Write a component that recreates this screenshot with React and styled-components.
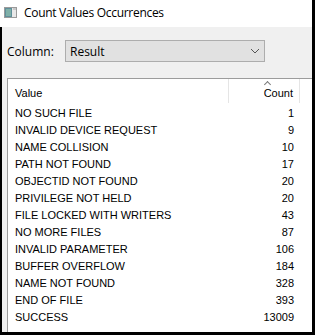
import React from 'react';
import styled, { createGlobalStyle } from 'styled-components';

const GlobalStyle = createGlobalStyle`
  html, body {
    margin: 0;
    padding: 0;
    background: #ffffff;
  }
`;

const rows = [
  { value: 'NO SUCH FILE', count: 1 },
  { value: 'INVALID DEVICE REQUEST', count: 9 },
  { value: 'NAME COLLISION', count: 10 },
  { value: 'PATH NOT FOUND', count: 17 },
  { value: 'OBJECTID NOT FOUND', count: 20 },
  { value: 'PRIVILEGE NOT HELD', count: 20 },
  { value: 'FILE LOCKED WITH WRITERS', count: 43 },
  { value: 'NO MORE FILES', count: 87 },
  { value: 'INVALID PARAMETER', count: 106 },
  { value: 'BUFFER OVERFLOW', count: 184 },
  { value: 'NAME NOT FOUND', count: 328 },
  { value: 'END OF FILE', count: 393 },
  { value: 'SUCCESS', count: 13009 },
];

const App = () => {
  return (
    <>
      <GlobalStyle />
      <Window>
        <TitleBar>
          <AppIcon width="13" height="11" viewBox="0 0 13 11">
            <rect x="0.5" y="0.5" width="12" height="10" fill="#e8e8e8" stroke="#9a9a9a" />
            <rect x="1" y="1" width="7" height="9" fill="#5f8f9a" />
            <rect x="2" y="2" width="5" height="7" fill="#7fb0a8" />
            <rect x="9" y="1" width="3" height="2" fill="#c8c8c8" />
          </AppIcon>
          <Title>Count Values Occurrences</Title>
        </TitleBar>
        <Body>
          <ColumnRow>
            <Label>Column:</Label>
            <Select>
              <span>Result</span>
              <Chevron width="10" height="6" viewBox="0 0 10 6">
                <path d="M1 1 L5 5 L9 1" fill="none" stroke="#555" strokeWidth="1" />
              </Chevron>
            </Select>
          </ColumnRow>
          <ListBox>
            <HeaderRow>
              <HeaderCell>Value</HeaderCell>
              <HeaderCell $right $sorted>Count</HeaderCell>
              <HeaderFiller />
            </HeaderRow>
            <Rows>
              {rows.map((r) => (
                <Row key={r.value}>
                  <Cell>{r.value}</Cell>
                  <Cell $right>{r.count}</Cell>
                </Row>
              ))}
            </Rows>
          </ListBox>
        </Body>
      </Window>
    </>
  );
};

const Window = styled.div`
  width: 315px;
  height: 335px;
  box-sizing: border-box;
  border-right: 3px solid #000;
  border-bottom: 3px solid #000;
  display: flex;
  flex-direction: column;
  overflow: hidden;
  background: #ffffff;
`;

const TitleBar = styled.div`
  height: 27px;
  flex: none;
  display: flex;
  align-items: center;
  padding-left: 4px;
  padding-bottom: 2px;
  box-sizing: border-box;
  background: #ffffff;
`;

const AppIcon = styled.svg`
  display: block;
  margin-right: 7px;
`;

const Title = styled.span`
  font-family: 'Open Sans', 'Noto Sans', sans-serif;
  font-size: 12px;
  color: #000;
  letter-spacing: -0.3px;
`;

const Body = styled.div`
  flex: 1;
  background: #f0f0f0;
  border-left: 2px solid #000;
  display: flex;
  flex-direction: column;
  padding: 13px 0 0 5px;
  min-height: 0;
`;

const ColumnRow = styled.div`
  display: flex;
  align-items: center;
  height: 22px;
`;

const Label = styled.span`
  font-family: 'Open Sans', 'Noto Sans', sans-serif;
  font-size: 12px;
  color: #000;
  width: 58px;
`;

const Select = styled.div`
  width: 200px;
  height: 22px;
  box-sizing: border-box;
  background: #e1e1e1;
  border: 1px solid #adadad;
  display: flex;
  align-items: center;
  justify-content: space-between;
  padding: 0 4px 0 4px;
  font-family: 'Open Sans', 'Noto Sans', sans-serif;
  font-size: 12px;
  color: #000;
`;

const Chevron = styled.svg`
  display: block;
`;

const ListBox = styled.div`
  margin-top: 16px;
  flex: 1;
  background: #ffffff;
  border: 1px solid #9c9c9c;
  border-right: none;
  border-bottom: none;
  display: flex;
  flex-direction: column;
  font-family: 'Liberation Sans', Arial, sans-serif;
  font-size: 11px;
  color: #000;
`;

const HeaderRow = styled.div`
  display: grid;
  grid-template-columns: 221px 71px 1fr;
  height: 24px;
  flex: none;
`;

const HeaderCell = styled.div`
  position: relative;
  display: flex;
  align-items: flex-end;
  justify-content: ${(p) => (p.$right ? 'flex-end' : 'flex-start')};
  padding: 0 ${(p) => (p.$right ? '6px' : '0')} 4px ${(p) => (p.$right ? '0' : '7px')};
  border-right: 1px solid #e5e5e5;

  ${(p) =>
    p.$sorted &&
    `
    &::before {
      content: '';
      position: absolute;
      top: 3px;
      left: 36px;
      width: 4px;
      height: 4px;
      border-left: 1px solid #7a7a7a;
      border-top: 1px solid #7a7a7a;
      transform: rotate(45deg);
    }
  `}
`;

const HeaderFiller = styled.div``;

const Rows = styled.div`
  display: flex;
  flex-direction: column;
  padding-top: 1px;
`;

const Row = styled.div`
  display: grid;
  grid-template-columns: 221px 71px;
  height: 17px;
  align-items: center;
`;

const Cell = styled.div`
  text-align: ${(p) => (p.$right ? 'right' : 'left')};
  padding: ${(p) => (p.$right ? '0 6px 0 0' : '0 0 0 7px')};
  white-space: nowrap;
`;

export default App;
